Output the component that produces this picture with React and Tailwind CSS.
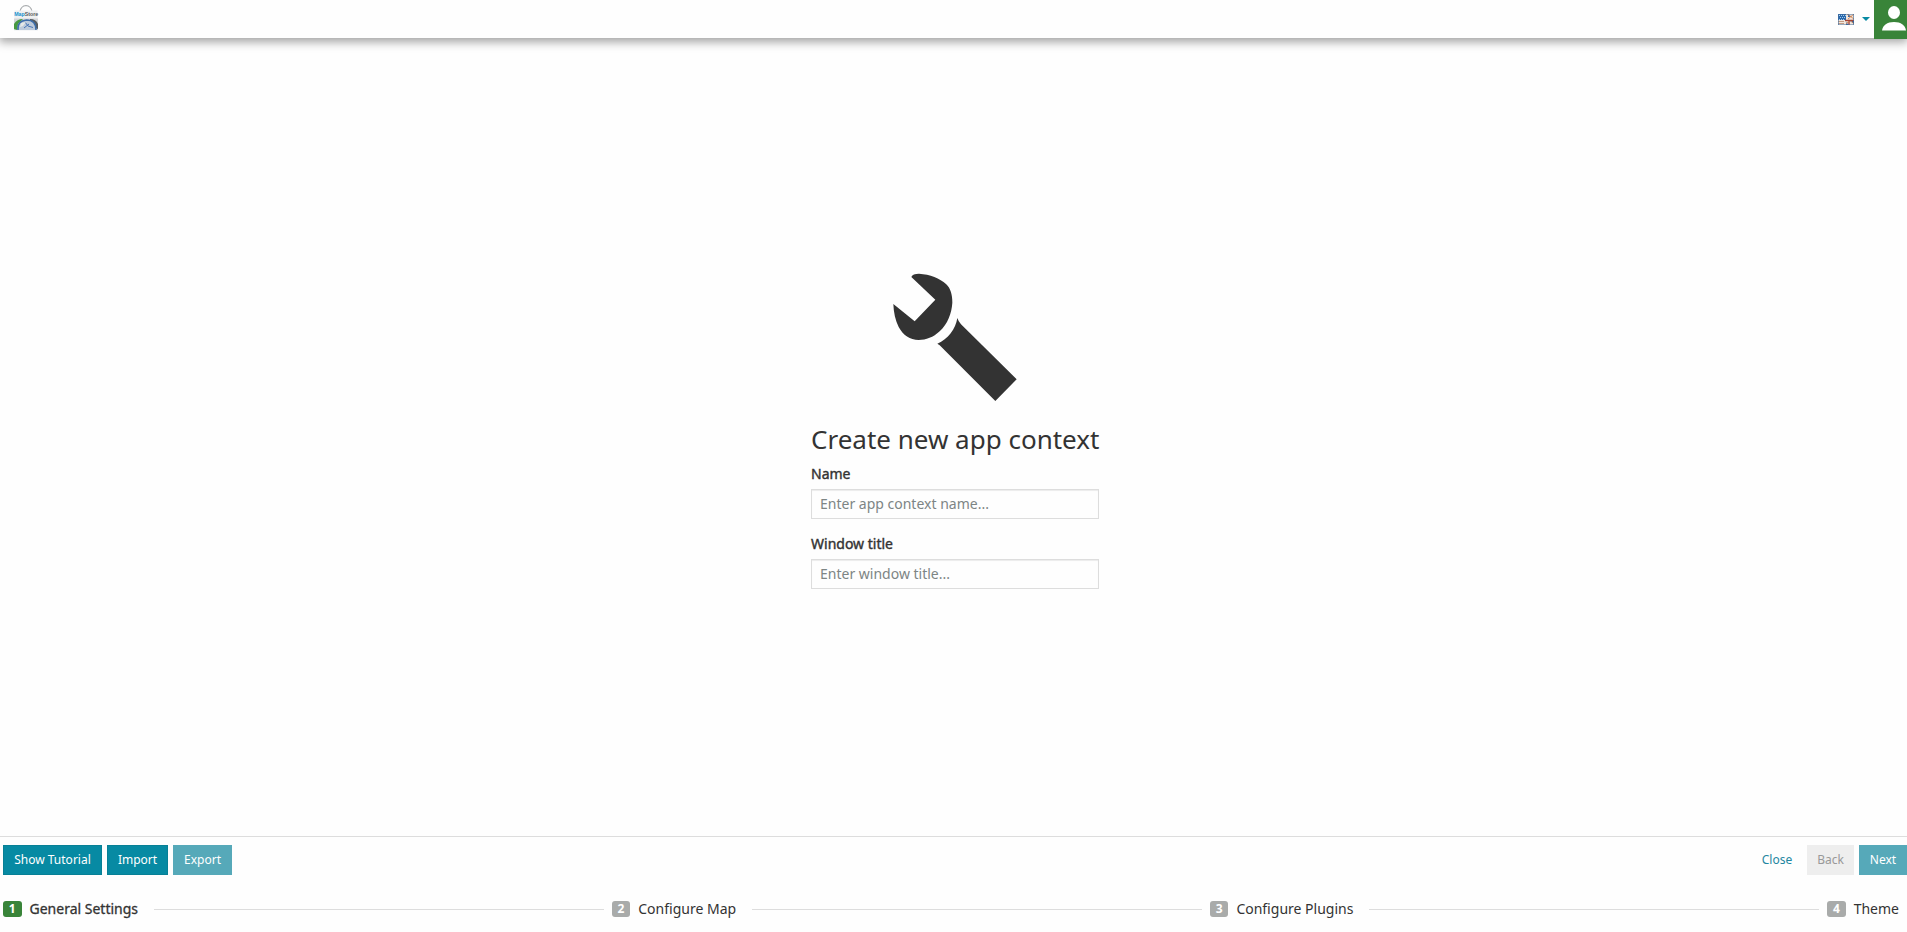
import React from 'react';

function Logo() {
  return (
    <svg className="ml-[13px] h-[30px] w-[26px]" viewBox="0 0 26 30" aria-hidden="true">
      <path d="M7 7.500Q8 2 13 1.500Q18 2 19 7.500" fill="none" stroke="#a9acae" strokeWidth="1.200" />
      <path d="M1.500 6.500h23l.5 20H1z" fill="#eef0f1" />
      <path d="M1 14.500h24V26H1z" fill="#d4d7da" />
      <path d="M1 25v-5q3-5 9-5l-5 5-1 6z" fill="#479941" />
      <path d="M17 15q6 0 8 5v5l-3-1q0-5-5-8z" fill="#555c61" />
      <path d="M5 26q-1-9 8.500-10 9.500 0 9.500 10" fill="#bccadb" stroke="#3c6daa" strokeWidth="1.500" />
      <path d="M12 18l3 4 5 1.500M16 20l-5 4" fill="none" stroke="#4775b5" />
      <path d="M8 19l5-1-3 4-3 1z" fill="#e6e9e7" />
      <text x="1.200" y="12" textLength="24" lengthAdjust="spacingAndGlyphs" className="font-['Liberation_Sans'] text-[5.500px] font-bold" fill="#168fce">Map<tspan fill="#55595d">Store</tspan></text>
    </svg>
  );
}

function Flag() {
  return (
    <svg className="h-[11px] w-4" viewBox="0 0 16 11" aria-hidden="true">
      <path d="M0 0h16v11H0z" fill="#f1e6dc" />
      <path d="M0 0h8v6H0zM10 0l4 3h-4zM16 6v4l-4-3zM8 8l3 3H8z" fill="#2868ad" />
      <path d="M1 1.500h7M2 3.500h6M1 5.500h6" stroke="#a9cbe5" strokeDasharray="1 1" />
      <path d="M0 7.500h6M0 9.500h6" stroke="#c39a82" />
      <path d="M7 6.500h9M11 6v5" stroke="#a34336" strokeWidth="1.400" />
      <path d="M9 0l7 5M16 0l-6 5M8 10l3-3M13 7l3 3" stroke="#d8844f" strokeWidth=".9" />
      <path d="M0 0h16v11H0z" fill="none" stroke="#446f9d" strokeWidth="1.200" />
    </svg>
  );
}

function Field({ label, placeholder }) {
  return (
    <label className="flex flex-col">
      <span className="mb-[5px] h-5 text-[14px] leading-5 [-webkit-text-stroke:0.4px_#333]">{label}</span>
      <input
        className="h-[30px] w-full border border-[#ddd] bg-[#fefefe] px-2 pb-[2px] text-[14px] shadow-[inset_0_1px_1px_rgba(0,0,0,0.075)] outline-none placeholder:text-[#7d8585]"
        placeholder={placeholder}
      />
    </label>
  );
}

function Step({ number, label, active }) {
  return (
    <div className="flex shrink-0 items-center gap-2">
      <span className={`flex h-4 w-[18.500px] items-center justify-center rounded-[3px] pb-px text-[12px] leading-[15px] font-bold text-white ${active ? 'bg-[#398439]' : 'bg-[#a9abaa]'}`}>{number}</span>
      <span className={`text-[14px] leading-5 ${active ? '[-webkit-text-stroke:0.3px_#333]' : ''}`}>{label}</span>
    </div>
  );
}

export default function App() {
  return (
    <div className="flex h-screen flex-col overflow-hidden bg-[#fefefe] font-['Noto_Sans',sans-serif] text-[#333]">
      <header className="relative flex h-[38px] shrink-0 items-center justify-between bg-[#fefefe] shadow-[0_3px_9px_1px_rgba(0,0,0,0.36)]">
        <Logo />
        <div className="flex h-full items-center">
          <Flag />
          <svg className="mr-[4px] ml-2 h-1 w-2" viewBox="0 0 8 4" aria-hidden="true"><path d="M0 0h8L4 4z" fill="#078aa3" /></svg>
          <button className="h-[39px] w-[33px] self-start overflow-hidden bg-[#398439]" aria-label="User">
            <svg className="h-[39px] w-[33px]" viewBox="0 0 33 39" fill="white" aria-hidden="true">
              <ellipse cx="20" cy="12.500" rx="6" ry="6.500" />
              <path d="M8 30.500C9 25 13 22 20 22s11 3 12 8.500z" />
            </svg>
          </button>
        </div>
      </header>

      <main className="flex min-h-0 flex-1 justify-center">
        <form className="ml-[3px] flex w-[288px] flex-col pt-[212px]">
          <svg className="h-[170px] w-[190px] self-center" viewBox="0 0 570 510" fill="#333" aria-hidden="true">
            <path d="M154 81C157 74 164 71 177 71 210 73 240 85 258 102 272 115 277 134 277 158 275 190 263 222 239 244 220 262 198 270 176 270 150 270 129 255 116 231 106 211 101 188 100 162L164 214 226 149Z" />
            <path d="M292 204Q295 214 303 223L470 388 406 453 239 286 232 281C264 267 287 237 292 204Z" />
          </svg>
          <h1 className="mb-[6px] text-center text-[26px] leading-[38px] font-normal whitespace-nowrap">Create new app context</h1>
          <div className="flex flex-col gap-[15px]">
            <Field label="Name" placeholder="Enter app context name..." />
            <Field label="Window title" placeholder="Enter window title..." />
          </div>
        </form>
      </main>

      <footer className="h-[96px] shrink-0 border-t border-[#ddd]">
        <div className="flex h-[46px] items-end justify-between pb-[8px] pl-[3px] text-[12px] leading-[18px]">
          <div className="flex gap-[5px] text-white">
            <button className="h-[30px] w-[99px] border border-[#078096] bg-[#078aa3]">Show Tutorial</button>
            <button className="h-[30px] w-[61px] border border-[#078096] bg-[#078aa3]">Import</button>
            <button className="h-[30px] w-[59px] bg-[#56a9b9]">Export</button>
          </div>
          <div className="flex gap-[5px]">
            <button className="h-[30px] w-[52px] text-[#2386a1]">Close</button>
            <button className="ml-[-1px] h-[30px] w-[47px] bg-[#eee] text-[#999]">Back</button>
            <button className="h-[30px] w-[48px] bg-[#56a9b9] text-white">Next</button>
          </div>
        </div>
        <nav className="flex h-[52px] items-center pr-2 pl-[3px]">
          <Step number={1} label="General Settings" active />
          <span className="mr-2 ml-4 h-px flex-1 bg-[#ddd]" />
          <Step number={2} label="Configure Map" />
          <span className="mr-2 ml-4 h-px flex-1 bg-[#ddd]" />
          <Step number={3} label="Configure Plugins" />
          <span className="mr-2 ml-4 h-px flex-1 bg-[#ddd]" />
          <Step number={4} label="Theme" />
        </nav>
      </footer>
    </div>
  );
}
